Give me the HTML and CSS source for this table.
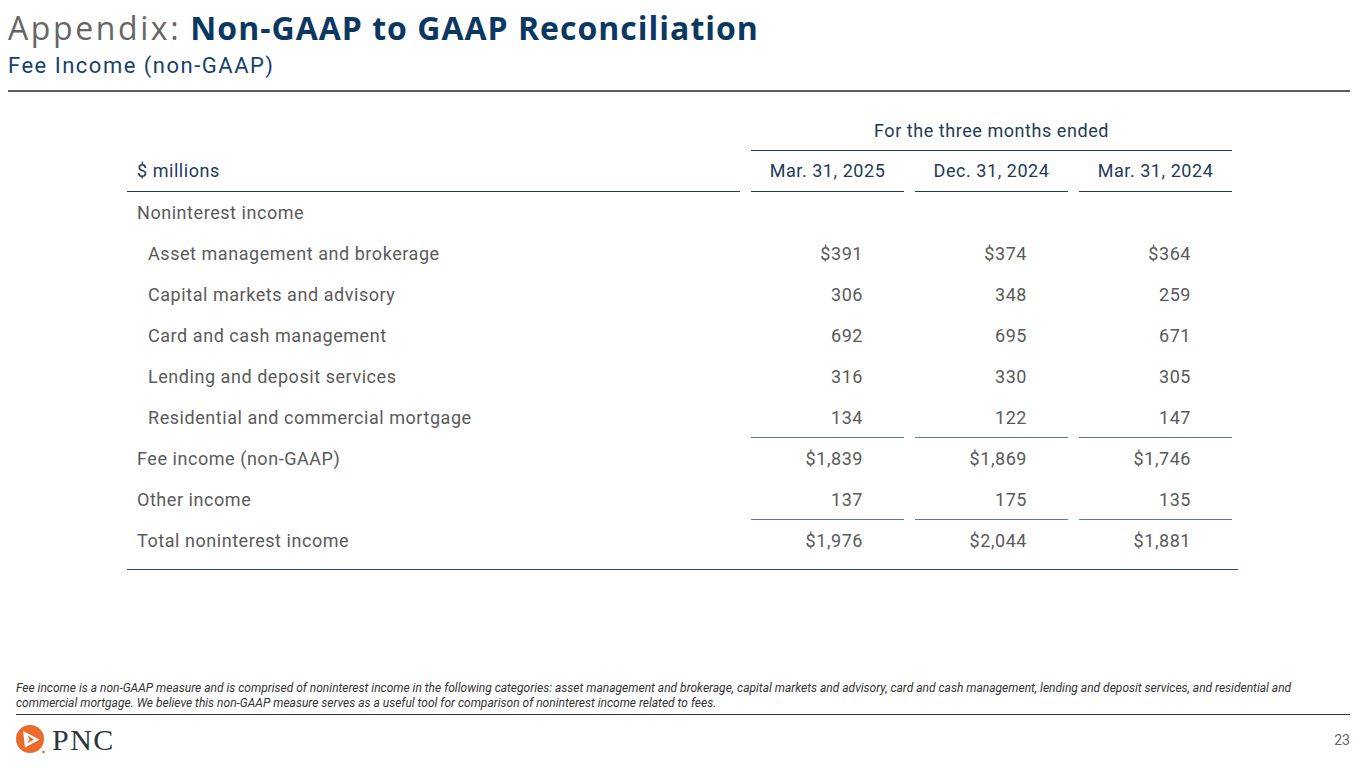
FILE: index.html
```html
<!DOCTYPE html>
<html>
<head>
<meta charset="utf-8">
<link rel="stylesheet" href="styles.css">
</head>
<body>
<div class="slide">
  <header class="head">
    <h1 class="title"><span class="title-light">Appendix:</span> <span class="title-bold">Non-GAAP to GAAP Reconciliation</span></h1>
    <h2 class="subtitle">Fee Income (non-GAAP)</h2>
  </header>

  <section class="table">
    <div class="row row-super">
      <div class="cell"></div>
      <div class="cell super">For the three months ended</div>
    </div>
    <div class="row row-head">
      <div class="cell label head-label">$ millions</div>
      <div class="cell date">Mar. 31, 2025</div>
      <div class="cell date">Dec. 31, 2024</div>
      <div class="cell date">Mar. 31, 2024</div>
    </div>
    <div class="row">
      <div class="cell label">Noninterest income</div>
      <div class="cell num"></div><div class="cell num"></div><div class="cell num"></div>
    </div>
    <div class="row">
      <div class="cell label sub">Asset management and brokerage</div>
      <div class="cell num">$391</div><div class="cell num">$374</div><div class="cell num">$364</div>
    </div>
    <div class="row">
      <div class="cell label sub">Capital markets and advisory</div>
      <div class="cell num">306</div><div class="cell num">348</div><div class="cell num">259</div>
    </div>
    <div class="row">
      <div class="cell label sub">Card and cash management</div>
      <div class="cell num">692</div><div class="cell num">695</div><div class="cell num">671</div>
    </div>
    <div class="row">
      <div class="cell label sub">Lending and deposit services</div>
      <div class="cell num">316</div><div class="cell num">330</div><div class="cell num">305</div>
    </div>
    <div class="row row-sum">
      <div class="cell label sub">Residential and commercial mortgage</div>
      <div class="cell num">134</div><div class="cell num">122</div><div class="cell num">147</div>
    </div>
    <div class="row">
      <div class="cell label">Fee income (non-GAAP)</div>
      <div class="cell num">$1,839</div><div class="cell num">$1,869</div><div class="cell num">$1,746</div>
    </div>
    <div class="row row-sum">
      <div class="cell label">Other income</div>
      <div class="cell num">137</div><div class="cell num">175</div><div class="cell num">135</div>
    </div>
    <div class="row row-last">
      <div class="cell label">Total noninterest income</div>
      <div class="cell num">$1,976</div><div class="cell num">$2,044</div><div class="cell num">$1,881</div>
    </div>
  </section>

  <footer class="foot">
    <p class="note">Fee income is a non-GAAP measure and is comprised of noninterest income in the following categories: asset management and brokerage, capital markets and advisory, card and cash management, lending and deposit services, and residential and commercial mortgage. We believe this non-GAAP measure serves as a useful tool for comparison of noninterest income related to fees.</p>
    <div class="foot-bar">
      <div class="logo">
        <svg class="logo-mark" width="32" height="30" viewBox="0 0 32 30">
          <circle cx="14" cy="14" r="14" fill="#ec6a2c"/>
          <path d="M7 6 L23.5 14.5 L9 22.5 Z" fill="#fff"/>
          <path d="M11.5 10.5 L18 14.5 L11 18.5 L13.5 14.5 Z" fill="#ec6a2c"/>
          <circle cx="27.5" cy="27" r="1.3" fill="#ec6a2c"/>
        </svg>
        <span class="logo-text">PNC</span>
      </div>
      <span class="page-num">23</span>
    </div>
  </footer>
</div>
</body>
</html>
```

FILE: styles.css
```css
* { box-sizing: border-box; }
html, body { margin: 0; padding: 0; background: #fff; }
.slide {
  width: 1365px;
  height: 768px;
  display: flex;
  flex-direction: column;
  font-family: Roboto, "Liberation Sans", sans-serif;
  overflow: hidden;
}
.head {
  margin: 0 15px 0 8px;
  padding-top: 7px;
  border-bottom: 2px solid #5e5e5e;
  height: 92px;
}
.title {
  margin: 0;
  font-family: "Open Sans", "Liberation Sans", sans-serif;
  font-size: 32px;
  line-height: 42px;
  font-weight: 700;
  letter-spacing: 0.8px;
}
.title-light { color: #666; font-weight: 400; letter-spacing: 2.6px; }
.title-bold { color: #0b3860; letter-spacing: 1px; }
.subtitle {
  margin: 2px 0 0;
  font-size: 22px;
  line-height: 30px;
  font-weight: 400;
  color: #17436b;
  letter-spacing: 1.5px;
}
.table {
  margin: 19px 0 0 127px;
  width: 1111px;
  border-bottom: 1.5px solid #2a4a66;
  padding-bottom: 8px;
}
.row {
  display: grid;
  grid-template-columns: 613px 153px 153px 153px;
  column-gap: 11px;
  height: 41px;
  align-items: center;
}
.row-super { grid-template-columns: 613px 481px; height: 40px; }
.cell { font-size: 18px; color: #5a5a5a; white-space: nowrap; letter-spacing: 0.55px; }
.super {
  text-align: center;
  color: #1f3b57;
  border-bottom: 1.5px solid #1f3b57;
  height: 40px;
  line-height: 40px;
}
.row-head .cell {
  height: 41px;
  line-height: 39px;
  border-bottom: 1.5px solid #1f3b57;
  color: #1f3b57;
}
.label { padding-left: 10px; }
.sub { padding-left: 21px; }
.date { text-align: center; }
.num { text-align: right; padding-right: 41px; }
.row-sum .num {
  height: 41px;
  line-height: 41px;
  border-bottom: 1.5px solid #5f7c96;
}
.row-sum .label { line-height: 41px; }
.foot {
  margin-top: auto;
  padding: 0 15px 0 16px;
}
.note {
  margin: 0;
  font-size: 12px;
  line-height: 15px;
  font-style: italic;
  color: #333;
  padding-bottom: 3px;
  border-bottom: 1.5px solid #333;
}
.foot-bar {
  display: flex;
  justify-content: space-between;
  align-items: center;
  height: 53px;
  padding-bottom: 4px;
}
.logo { display: flex; align-items: center; gap: 4px; }
.logo-mark { display: block; }
.logo-text {
  font-family: "Liberation Serif", serif;
  font-size: 30px;
  letter-spacing: 1.5px;
  color: #2c3641;
}
.page-num { font-size: 14px; color: #666; }
```
